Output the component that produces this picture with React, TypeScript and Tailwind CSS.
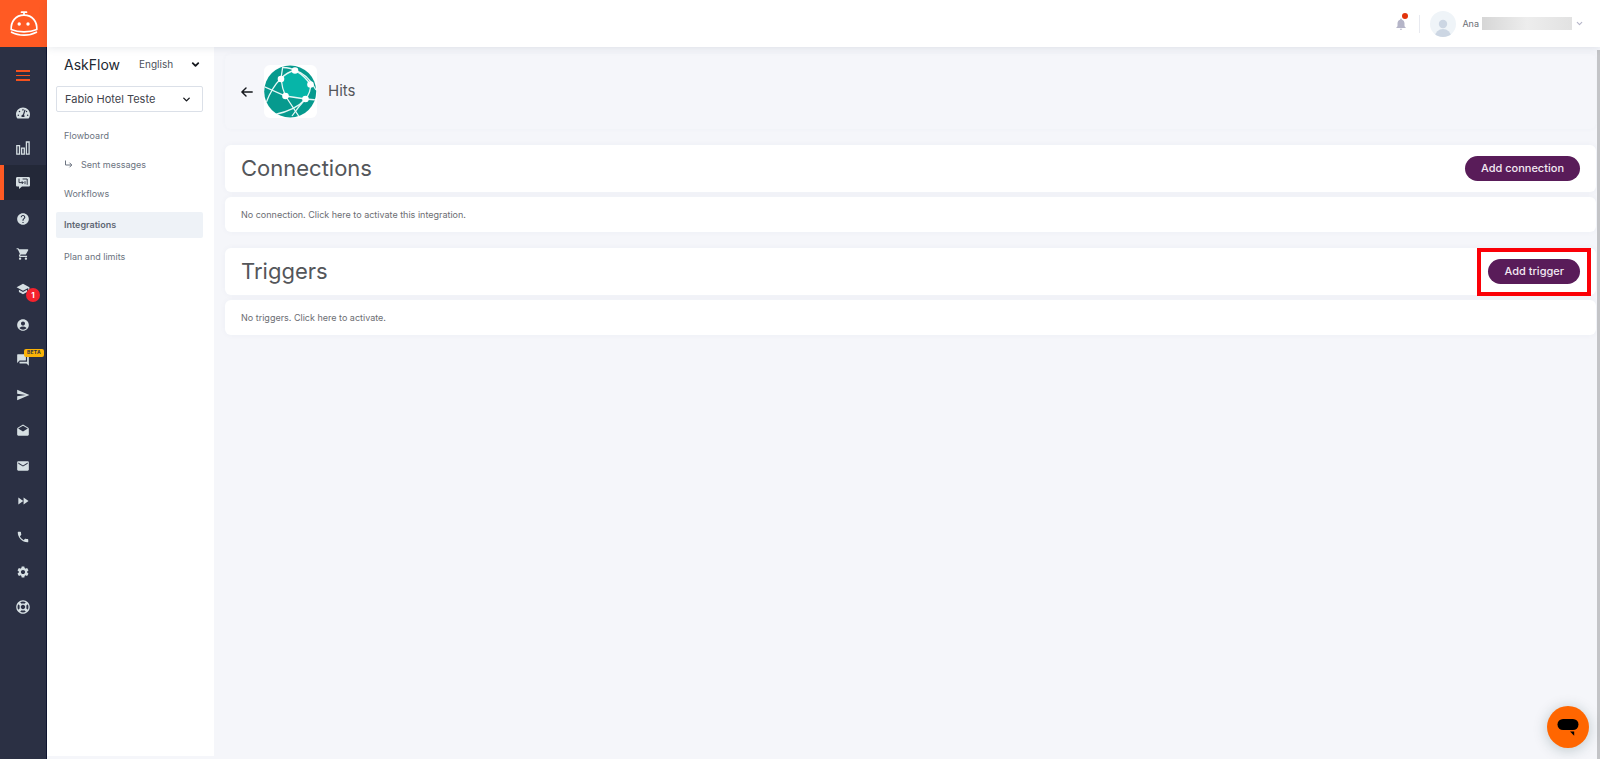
import type { ReactNode } from "react";
import {
  MdHelp,
  MdShoppingCart,
  MdSchool,
  MdAccountCircle,
  MdForum,
  MdSend,
  MdDrafts,
  MdEmail,
  MdFastForward,
  MdPhone,
  MdSettings,
  MdNotifications,
} from "react-icons/md";
import { FaTachometerAlt, FaRegLifeRing } from "react-icons/fa";
import { ChevronDown } from "lucide-react";

function BellLogo() {
  return (
    <svg width="30" height="28" viewBox="0 0 30 28" fill="none" stroke="#fff" strokeWidth="1.7" strokeLinecap="round" aria-hidden="true">
      <path d="M12.500 2.200h5M15 2.200v3" />
      <path d="M2.200 19.500C1.800 11.500 6.500 5.200 15 5.200s13.200 6.300 12.800 14.300c-7 3.200-18.600 3.200-25.600 0Z" strokeLinejoin="round" />
      <path d="M2.600 22.200c7 3.900 17.800 3.900 24.800 0" />
      <circle cx="10.200" cy="14" r="1.700" fill="#fff" stroke="none" />
      <circle cx="19" cy="14" r="1.700" fill="#fff" stroke="none" />
    </svg>
  );
}

function BarsIcon() {
  return (
    <svg width="14" height="14" viewBox="0 0 14 14" fill="none" stroke="currentColor" strokeWidth="1.300" aria-hidden="true">
      <path d="M.8 4.700h2.700v8.500H.8zM5.600 7.200h2.700v6H5.600zM10.400 1h2.700v12.200h-2.700z" />
    </svg>
  );
}

function FlowChatIcon() {
  return (
    <svg width="14" height="12" viewBox="0 0 14 12" aria-hidden="true">
      <path fill="currentColor" d="M1.400 0h11.200C13.400 0 14 .6 14 1.400v6.800c0 .8-.6 1.400-1.400 1.400H6L3 12V9.600H1.400C.6 9.600 0 9 0 8.200V1.400C0 .6.600 0 1.400 0Z" />
      <path fill="none" stroke="#232838" strokeWidth=".9" d="M3 1.600v4h4.200M5.800 4.200 7.200 5.600 5.800 7M6.600 2h4.600v5.800M9 4.200v3" />
    </svg>
  );
}

function HitsLogo() {
  return (
    <svg width="53" height="53" viewBox="0 0 53 53" role="img" aria-label="Hits logo">
      <defs>
        <clipPath id="globe">
          <circle cx="26.200" cy="26.500" r="26" />
        </clipPath>
      </defs>
      <g clipPath="url(#globe)">
        <rect width="53" height="53" fill="#069a8e" />
        <path d="M17 13.500Q23 7 31 5.500L36 8Q44 12 46.500 19.500 47 27 41.500 34L21.500 31Q18 23 17 13.500Z" fill="#06b5a8" />
        <g fill="none" stroke="#e4f7f5" strokeWidth="1.300">
          <path d="M19 0 17 13.500Q18 23 21.500 31L36 53" />
          <path d="M0 21.500 21.500 31 41.500 34 53 35" />
          <path d="M2 38Q8 22 17 13.500 23 7 31 5.500" />
          <path d="M18 2.500Q34 2 46.500 19.500" />
          <path d="M31 5.500Q44 9 52 25" />
          <path d="M46.500 19.500Q47 27 41.500 34 32 45 11 49.500" />
          <path d="M41.500 34Q35 41 28 51" />
        </g>
      </g>
      <g fill="#fff">
        <circle cx="17" cy="14" r="3.300" />
        <circle cx="31" cy="5.500" r="3.300" />
        <circle cx="46.500" cy="19.500" r="3.300" />
        <circle cx="21.500" cy="31" r="3.300" />
        <circle cx="41.500" cy="34" r="3.300" />
      </g>
    </svg>
  );
}

type RailItem = { label: string; icon: ReactNode; active?: boolean; badge?: "count" | "beta" };

const railGroups: RailItem[][] = [
  [
    { label: "Dashboard", icon: <FaTachometerAlt size={14} /> },
    { label: "Reports", icon: <BarsIcon /> },
    { label: "AskFlow", icon: <FlowChatIcon />, active: true },
  ],
  [
    { label: "Questions", icon: <MdHelp size={14} /> },
    { label: "Store", icon: <MdShoppingCart size={14} /> },
    { label: "Academy", icon: <MdSchool size={14} />, badge: "count" },
  ],
  [
    { label: "Account", icon: <MdAccountCircle size={14} /> },
    { label: "Conversations", icon: <MdForum size={14} />, badge: "beta" },
    { label: "Send", icon: <MdSend size={14} /> },
  ],
  [
    { label: "Drafts", icon: <MdDrafts size={14} /> },
    { label: "Mail", icon: <MdEmail size={14} /> },
    { label: "Automations", icon: <MdFastForward size={14} /> },
  ],
  [
    { label: "Phone", icon: <MdPhone size={14} /> },
    { label: "Settings", icon: <MdSettings size={14} /> },
    { label: "Support", icon: <FaRegLifeRing size={14} /> },
  ],
];

function Rail() {
  return (
    <div className="flex w-[47px] shrink-0 flex-col bg-[#2b3044]">
      <a href="#home" aria-label="Home" className="flex h-[47px] shrink-0 items-center justify-center bg-[#ff5a23]">
        <BellLogo />
      </a>
      <div className="flex flex-1 flex-col border-r border-[#0e1430]">
        <button type="button" aria-label="Menu" className="flex h-12 shrink-0 flex-col items-center justify-center gap-[3px] pt-2">
          <span className="h-0.5 w-3.5 bg-[#f4511e]" />
          <span className="h-px w-3.5 bg-[#f4511e]" />
          <span className="h-0.5 w-3.5 bg-[#f4511e]" />
        </button>
        <nav className="flex flex-col gap-px" aria-label="Modules">
          {railGroups.map((group, index) => (
            <div key={index} className="flex flex-col">
              {group.map((item) => (
                <a
                  key={item.label}
                  href="#module"
                  aria-label={item.label}
                  className={
                    item.active
                      ? "flex h-[35px] items-center justify-center border-l-4 border-[#ff5a23] bg-[#232838] pr-1 text-[#d6dfe3]"
                      : "flex h-[35px] items-center justify-center text-[#d6dfe3]"
                  }
                >
                  <span className="relative flex">
                    {item.icon}
                    {item.badge === "count" && (
                      <span className="absolute top-1.5 left-2.5 flex size-3.5 items-center justify-center rounded-full bg-[#f5222d] text-[8px] font-bold text-white">
                        1
                      </span>
                    )}
                    {item.badge === "beta" && (
                      <span className="absolute -top-1 left-2 flex h-2 w-5 items-center justify-center rounded-xs bg-[#fbb307] text-[5px] font-bold tracking-wider text-[#2b3044]">
                        BETA
                      </span>
                    )}
                  </span>
                </a>
              ))}
            </div>
          ))}
        </nav>
      </div>
    </div>
  );
}

function Header() {
  return (
    <header className="relative z-10 flex h-[47px] shrink-0 items-center justify-end bg-white pr-4 shadow-[0_1px_8px_rgba(60,70,100,0.12)]">
      <button type="button" aria-label="Notifications" className="relative text-[#b5b5c8]">
        <MdNotifications size={14} />
        <span className="absolute -top-1 left-2 size-1.5 rounded-full bg-[#e2330b]" />
      </button>
      <span className="ml-[11px] h-[18px] w-px bg-[#e8eaf0]" />
      <button type="button" className="ml-2.5 flex items-center text-[9px] text-[#6b6f76]">
        <svg width="26" height="26" viewBox="0 0 26 26" aria-hidden="true">
          <clipPath id="avatar">
            <circle cx="13" cy="13" r="13" />
          </clipPath>
          <g clipPath="url(#avatar)">
            <rect width="26" height="26" fill="#eff4f8" />
            <circle cx="13" cy="13" r="4.200" fill="#ccd6e3" />
            <ellipse cx="13" cy="25.500" rx="8" ry="7.500" fill="#ccd6e3" />
          </g>
        </svg>
        <span className="ml-1.5">Ana</span>
        <span className="ml-[3px] h-[13px] w-[90px] bg-linear-to-r from-[#d6d6d6] via-[#ededed] to-[#e2e2e2]" />
        <ChevronDown size={9} strokeWidth={3} className="ml-[3px] text-[#b5b5c8]" />
      </button>
    </header>
  );
}

function SideMenu() {
  return (
    <aside className="mb-[3px] flex w-[167px] shrink-0 flex-col bg-white pr-[11px] pl-[9px]">
      <div className="mt-[7px] flex h-5 items-center px-2">
        <h1 className="text-[14px] text-[#222831]">AskFlow</h1>
        <label className="relative ml-[19px] flex flex-1 items-center">
          <span className="sr-only">Language</span>
          <select className="h-5 w-full appearance-none bg-transparent text-[10px]/5 text-[#4d525a]" defaultValue="English">
            <option>English</option>
          </select>
          <ChevronDown size={11} strokeWidth={4} className="pointer-events-none absolute -right-1.5 text-[#15181d]" />
        </label>
      </div>
      <label className="relative mt-3 flex items-center">
        <span className="sr-only">Property</span>
        <select
          className="h-[26px] w-full appearance-none rounded-xs border border-[#dbe0e8] bg-white px-2 text-[11px]/6 text-[#3f444c]"
          defaultValue="Fabio Hotel Teste"
        >
          <option>Fabio Hotel Teste</option>
        </select>
        <ChevronDown size={11} strokeWidth={3} className="pointer-events-none absolute right-[11px] text-[#15181d]" />
      </label>
      <nav className="mt-[9px] flex flex-col text-[9px] text-[#6b7380]" aria-label="AskFlow">
        <a href="#flowboard" className="flex h-[29px] items-center px-2">Flowboard</a>
        <a href="#sent" className="flex h-[29px] items-center gap-2 px-2">
          <svg width="9" height="9" viewBox="0 0 9 9" fill="none" stroke="currentColor" strokeWidth="1" aria-hidden="true">
            <path d="M1.500.5v4.500h6M5.500 2.700 7.800 5 5.500 7.300" />
          </svg>
          Sent messages
        </a>
        <a href="#workflows" className="flex h-[29px] items-center px-2">Workflows</a>
        <a href="#integrations" className="my-1 flex h-[26px] items-center rounded-xs bg-[#eef2f7] px-2 font-semibold text-[#5f6875]">
          Integrations
        </a>
        <a href="#plan" className="flex h-[30px] items-center px-2">Plan and limits</a>
      </nav>
    </aside>
  );
}

type SectionProps = { title: string; action: string; empty: string; highlighted?: boolean };

function Section({ title, action, empty, highlighted }: SectionProps) {
  return (
    <section className="mt-4 flex flex-col gap-[5px]">
      <div className="flex h-[47px] items-center justify-between rounded-md bg-white px-4 shadow-[0_0_6px_rgba(60,80,120,0.04)]">
        <h2 className="pb-px text-[22px] text-[#54565a]">{title}</h2>
        <div className="relative">
          <button type="button" className="flex h-[25px] items-center rounded-full bg-[#591c59] px-4 text-[11px] font-medium text-[#f3e9f3]">
            {action}
          </button>
          {highlighted && (
            <span className="pointer-events-none absolute -top-[11px] -right-[11px] -bottom-3 -left-[11px] border-4 border-[#fb0007]" />
          )}
        </div>
      </div>
      <p className="flex h-[35px] items-center rounded-md bg-white px-4 text-[9px] text-[#6b6d72] shadow-[0_0_6px_rgba(60,80,120,0.04)]">
        {empty}
      </p>
    </section>
  );
}

export default function App() {
  return (
    <div className="flex min-h-screen bg-[#f5f6fa] font-['Inter',sans-serif]">
      <Rail />
      <div className="flex min-w-0 flex-1 flex-col">
        <Header />
        <div className="flex flex-1">
          <SideMenu />
          <main className="min-w-0 flex-1 pt-[7px] pr-px pl-[11px]">
            <div className="flex h-[75px] items-center rounded-md pl-4 shadow-[0_0_5px_rgba(60,80,120,0.03)]">
              <a href="#back" aria-label="Back" className="text-[#15181d]">
                <svg width="12" height="10" viewBox="0 0 12 10" fill="none" stroke="currentColor" strokeWidth="1.400" strokeLinecap="round" strokeLinejoin="round" aria-hidden="true">
                  <path d="M5 .9.900 5 5 9.100M1 5h10.200" />
                </svg>
              </a>
              <span className="ml-[11px] overflow-hidden rounded-md bg-white">
                <HitsLogo />
              </span>
              <h2 className="ml-[11px] text-[15px] text-[#54565a]">Hits</h2>
            </div>
            <Section title="Connections" action="Add connection" empty="No connection. Click here to activate this integration." />
            <Section title="Triggers" action="Add trigger" empty="No triggers. Click here to activate." highlighted />
          </main>
          <div className="mt-[3px] w-[3px] shrink-0 bg-[#c3c4c7]" />
        </div>
      </div>
      <button
        type="button"
        aria-label="Open chat"
        className="fixed right-[11px] bottom-[11px] flex size-[42px] items-center justify-center rounded-full bg-[#ff6600] shadow-[0_2px_14px_rgba(20,60,60,0.25)]"
      >
        <svg width="22" height="18" viewBox="0 0 22 18" aria-hidden="true">
          <rect x="0.500" y="1" width="21" height="11" rx="5.500" />
          <path d="M13 13.500h4.200v4.200Z" />
        </svg>
      </button>
    </div>
  );
}
